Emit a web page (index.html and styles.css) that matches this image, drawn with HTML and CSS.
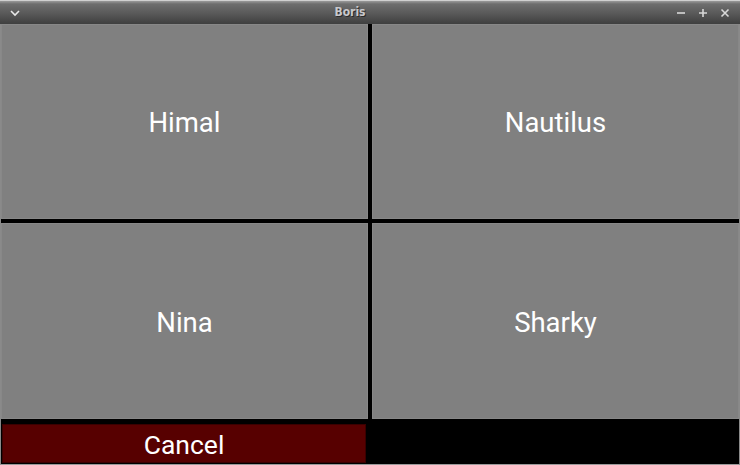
FILE: index.html
```html
<!DOCTYPE html>
<html>
<head>
<meta charset="utf-8">
<link rel="stylesheet" href="styles.css">
</head>
<body>
<div class="window">
  <div class="titlebar">
    <svg class="menu-icon" width="12" height="8" viewBox="0 0 12 8"><path d="M2 2 L6 6 L10 2" fill="none" stroke="#e8e8e8" stroke-width="1.6"/></svg>
    <div class="title">Boris</div>
    <div class="controls">
      <svg width="10" height="10" viewBox="0 0 10 10"><path d="M1 5 H9" stroke="#d8d8d8" stroke-width="1.6"/></svg>
      <svg width="10" height="10" viewBox="0 0 10 10"><path d="M1 5 H9 M5 1 V9" stroke="#d8d8d8" stroke-width="1.6"/></svg>
      <svg width="10" height="10" viewBox="0 0 10 10"><path d="M1.5 1.5 L8.5 8.5 M8.5 1.5 L1.5 8.5" stroke="#d8d8d8" stroke-width="1.6"/></svg>
    </div>
  </div>
  <div class="grid">
    <div class="tile tile-high">Himal</div>
    <div class="tile tile-high">Nautilus</div>
    <div class="tile tile-low">Nina</div>
    <div class="tile tile-low">Sharky</div>
    <div class="bottom-cell"><div class="cancel">Cancel</div></div>
    <div class="bottom-cell"></div>
  </div>
</div>
</body>
</html>
```
FILE: styles.css
```css
html, body {
  margin: 0;
  padding: 0;
  background: #000;
}
.window {
  width: 740px;
  height: 465px;
  box-sizing: border-box;
  display: flex;
  flex-direction: column;
  background: #000;
  border-bottom: 1px solid #9a9a9a;
  border-left: 1px solid #8a8a8a;
  border-right: 1px solid #8a8a8a;
  font-family: Roboto, "Liberation Sans", sans-serif;
}
.titlebar {
  height: 24px;
  flex: none;
  display: flex;
  align-items: center;
  position: relative;
  background: linear-gradient(#9a9a9a 0px, #6e6e6e 3px, #5a5a5a 12px, #3c3d3d 24px);
  border-top: 1px solid #d0d0d0;
  box-sizing: border-box;
  margin: 0 -1px;
}
.menu-icon {
  margin-left: 9px;
}
.title {
  position: absolute;
  left: 0;
  right: 0;
  text-align: center;
  top: 4px;
  font-family: "DejaVu Sans Condensed", "DejaVu Sans", sans-serif;
  font-weight: bold;
  font-size: 12px;
  color: #c8c8cc;
  text-shadow: 1px 1px 0 #2a2a2a;
  margin-right: 40px;
}
.controls {
  margin-left: auto;
  margin-right: 10px;
  display: flex;
  gap: 12px;
}
.grid {
  flex: 1;
  display: grid;
  grid-template-columns: 367px 367px;
  grid-template-rows: 195px 196px 41px;
  column-gap: 4px;
  row-gap: 4px;
}
.tile {
  background: #808080;
  border: 1px solid #888;
  box-sizing: border-box;
  display: flex;
  align-items: center;
  justify-content: center;
  color: #fff;
  font-size: 27.5px;
}
.tile-high {
  padding-top: 2px;
}
.tile-low {
  padding-top: 3px;
}
.bottom-cell {
  display: flex;
  padding: 1px 2px 1px 1px;
}
.cancel {
  flex: 1;
  background: #570000;
  border: 1px solid #3a0000;
  color: #fff;
  font-size: 26.5px;
  display: flex;
  align-items: center;
  justify-content: center;
  padding-top: 1px;
}
```
